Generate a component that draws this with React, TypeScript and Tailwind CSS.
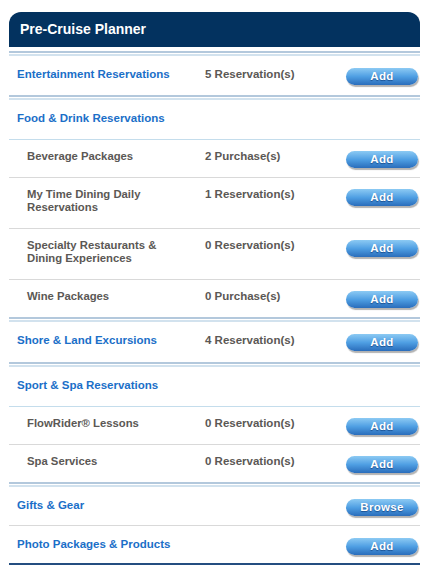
import React from "react";

const FONT = { fontFamily: '"Liberation Sans", Arial, sans-serif' };

function DoubleLine() {
  return (
    <div>
      <div className="h-[2px] bg-[#b3c8dc]" />
      <div className="h-[1px] bg-white" />
      <div className="h-[2px] bg-[#d2e2ee]" />
    </div>
  );
}

function BlueLine() {
  return <div className="h-[1px] bg-[#c4ddec]" />;
}

function GreyLine() {
  return <div className="h-[1px] bg-[#d9d9d9]" />;
}

function PillButton({ label }: { label: string }) {
  return (
    <div className="flex h-[17px] w-[72px] items-center justify-center rounded-full bg-gradient-to-b from-[#8ccaf3] via-[#4f9fe3] to-[#2a6dbb] shadow-[1px_2px_1px_rgba(0,0,0,0.3)]">
      <span className="text-[11.5px] font-bold leading-none tracking-[0.3px] text-white [text-shadow:0_1px_1px_rgba(0,40,100,0.6)]">
        {label}
      </span>
    </div>
  );
}

type RowProps = {
  name: string;
  count?: string;
  btn?: string;
  sub?: boolean;
  pb?: string;
};

function Row({ name, count, btn, sub, pb }: RowProps) {
  return (
    <div
      className={`grid grid-cols-[196px_141px_72px] items-start ${sub ? "pt-[10px]" : "pt-[12px]"} ${pb ?? "pb-[14px]"}`}
    >
      <div
        className={
          sub
            ? "pl-[18px] pr-[20px] text-[11.3px] font-bold leading-[13px] text-[#5b5855]"
            : "pl-[8px] pr-[20px] text-[11.5px] font-bold leading-[13px] text-[#1b6fc8]"
        }
      >
        {name}
      </div>
      <div className="text-[11.5px] font-bold leading-[13px] text-[#5b5855]">
        {count ?? ""}
      </div>
      <div className={`h-[13px] ${sub ? "pt-[1px]" : ""}`}>
        {btn ? <PillButton label={btn} /> : null}
      </div>
    </div>
  );
}

export default function App() {
  return (
    <div className="min-h-[575px] w-[429px] bg-white pl-[9px] pt-[12px]" style={FONT}>
      <div className="w-[411px]">
        <div className="flex h-[35px] items-center rounded-t-[12px] bg-[#03325f] pl-[11px]">
          <span className="text-[14px] font-bold text-white">Pre-Cruise Planner</span>
        </div>
        <div className="h-[4px]" />
        <DoubleLine />
        <Row name="Entertainment Reservations" count="5 Reservation(s)" btn="Add" />
        <DoubleLine />
        <Row name="Food & Drink Reservations" />
        <BlueLine />
        <Row sub name="Beverage Packages" count="2 Purchase(s)" btn="Add" />
        <GreyLine />
        <Row sub name="My Time Dining Daily Reservations" count="1 Reservation(s)" btn="Add" />
        <GreyLine />
        <Row sub name="Specialty Restaurants & Dining Experiences" count="0 Reservation(s)" btn="Add" />
        <GreyLine />
        <Row sub name="Wine Packages" count="0 Purchase(s)" btn="Add" />
        <DoubleLine />
        <Row name="Shore & Land Excursions" count="4 Reservation(s)" btn="Add" pb="pb-[15px]" />
        <DoubleLine />
        <Row name="Sport & Spa Reservations" />
        <BlueLine />
        <Row sub name="FlowRider® Lessons" count="0 Reservation(s)" btn="Add" />
        <GreyLine />
        <Row sub name="Spa Services" count="0 Reservation(s)" btn="Add" />
        <DoubleLine />
        <Row name="Gifts & Gear" btn="Browse" pb="pb-[13px]" />
        <GreyLine />
        <Row name="Photo Packages & Products" btn="Add" pb="pb-[12px]" />
        <div className="h-[2px] bg-[#244e80]" />
      </div>
    </div>
  );
}
